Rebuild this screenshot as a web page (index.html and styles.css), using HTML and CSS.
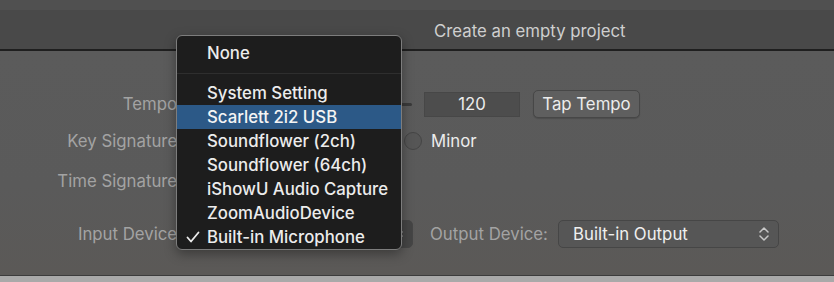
FILE: index.html
```html
<!DOCTYPE html>
<html>
<head>
<meta charset="utf-8">
<link rel="stylesheet" href="styles.css">
</head>
<body>
<div class="window">
  <div class="topstrip"></div>
  <div class="header"><span class="title">Create an empty project</span></div>
  <div class="content">
    <div class="row row-tempo">
      <div class="label">Tempo:</div>
      <div class="controls">
        <div class="slider"><div class="track"></div></div>
        <div class="field">120</div>
        <div class="button">Tap Tempo</div>
      </div>
    </div>
    <div class="row row-key">
      <div class="label">Key Signature:</div>
      <div class="controls">
        <div class="major"><span class="radio"></span><span class="text">Major</span></div>
        <span class="radio"></span><span class="text">Minor</span>
      </div>
    </div>
    <div class="row row-time">
      <div class="label">Time Signature:</div>
      <div class="controls">
        <div class="popup small"><span>4/4</span></div>
      </div>
    </div>
    <div class="row row-device">
      <div class="label">Input Device:</div>
      <div class="controls">
        <div class="popup input">
          <span>Built-in Microphone</span>
          <svg class="chevs" width="12" height="18" viewBox="0 0 12 18"><path d="M2 7 L6 3 L10 7 M2 11 L6 15 L10 11" fill="none" stroke="#a8a8a8" stroke-width="1.5" stroke-linecap="round" stroke-linejoin="round"/></svg>
        </div>
        <div class="label out-label">Output Device:</div>
        <div class="popup output">
          <span>Built-in Output</span>
          <svg class="chevs" width="12" height="18" viewBox="0 0 12 18"><path d="M2 7 L6 3 L10 7 M2 11 L6 15 L10 11" fill="none" stroke="#c8c8c8" stroke-width="1.5" stroke-linecap="round" stroke-linejoin="round"/></svg>
        </div>
      </div>
    </div>
  </div>
  <div class="bottom"></div>

  <div class="menu">
    <div class="item">None</div>
    <div class="sep"></div>
    <div class="item">System Setting</div>
    <div class="item active">Scarlett 2i2 USB</div>
    <div class="item">Soundflower (2ch)</div>
    <div class="item">Soundflower (64ch)</div>
    <div class="item">iShowU Audio Capture</div>
    <div class="item">ZoomAudioDevice</div>
    <div class="item checked"><svg class="check" width="14" height="12" viewBox="0 0 14 12"><path d="M1.5 6.5 L5 10.5 L12.5 1.5" fill="none" stroke="#ececec" stroke-width="1.8" stroke-linecap="round" stroke-linejoin="round"/></svg>Built-in Microphone</div>
  </div>
</div>
</body>
</html>
```

FILE: styles.css
```css
* { box-sizing: border-box; }
html, body { margin: 0; padding: 0; }
body {
  width: 834px;
  height: 282px;
  overflow: hidden;
  font-family: Inter, "Noto Sans", "Liberation Sans", sans-serif;
  font-size: 16.8px;
  background: #5a5a5a;
}
.window {
  position: relative;
  width: 834px;
  height: 282px;
  display: flex;
  flex-direction: column;
}
.topstrip {
  height: 10px;
  background: #505050;
}
.header {
  height: 41px;
  background: #494949;
  border-bottom: 2px solid #1f1f1f;
  display: flex;
  align-items: center;
  padding-left: 434px;
  padding-top: 2px;
}
.title {
  color: #cfcfcf;
}
.content {
  flex: 1;
  background: linear-gradient(180deg, #5b5b5b 0%, #5a5a5a 60%, #5b5957 100%);
  padding-top: 39px;
  display: flex;
  flex-direction: column;
}
.row {
  display: flex;
  align-items: center;
  height: 28px;
}
.row-key { margin-top: 9px; }
.row-time { margin-top: 12px; }
.row-device { margin-top: 25px; }
.label {
  color: #a3a3a3;
  width: 182px;
  text-align: right;
  white-space: nowrap;
}
.controls {
  margin-left: 8px;
  display: flex;
  align-items: center;
  height: 28px;
}
.text { color: #ececec; }
.slider {
  width: 222px;
  height: 20px;
  display: flex;
  align-items: center;
}
.track {
  width: 100%;
  height: 3px;
  border-radius: 2px;
  background: #3a3a3a;
}
.field {
  margin-left: 12px;
  width: 96px;
  height: 25px;
  background: #4d4d4d;
  border: 1px solid #474747;
  color: #ececec;
  text-align: center;
  line-height: 23px;
}
.button {
  margin-left: 13px;
  width: 107px;
  height: 28px;
  background: #5f5f5f;
  border: 1px solid #474747;
  border-radius: 5px;
  color: #ececec;
  text-align: center;
  line-height: 26px;
  box-shadow: 0 1px 1px rgba(0,0,0,0.15);
}
.major {
  width: 214px;
  display: flex;
  align-items: center;
}
.radio {
  display: inline-block;
  width: 18px;
  height: 18px;
  border-radius: 50%;
  background: #565656;
  border: 1px solid #454545;
}
.major .text { margin-left: 8px; }
.radio + .text { margin-left: 9px; }
.popup {
  height: 28px;
  border-radius: 5px;
  background: #565656;
  border: 1px solid #464646;
  color: #efefef;
  display: flex;
  align-items: center;
  padding-left: 14px;
  position: relative;
  white-space: nowrap;
}
.popup.small { width: 80px; }
.popup.input { width: 223px; background: #454545; }
.out-label {
  width: 118px;
  text-align: left;
  margin-left: 17px;
}
.popup.output {
  margin-left: 10px;
  width: 221px;
}
.chevs {
  position: absolute;
  right: 8px;
  top: 4px;
}
.bottom {
  height: 7px;
  background: #a9a9a9;
  border-top: 1px solid #3c3c3c;
}
.menu {
  position: absolute;
  left: 176px;
  top: 35px;
  width: 226px;
  height: 215px;
  background: #1d1d1d;
  border: 1px solid #7d7d7d;
  border-radius: 6px;
  padding: 5px 0 2px;
  box-shadow: 0 4px 12px rgba(0,0,0,0.35);
}
.item {
  height: 24px;
  line-height: 24px;
  padding-left: 30px;
  color: #ececec;
  font-weight: 500;
  white-space: nowrap;
  position: relative;
}
.item.active {
  background: #2c5987;
  color: #f4f4f4;
}
.sep {
  height: 16px;
  display: flex;
  align-items: center;
}
.sep::before {
  content: "";
  display: block;
  width: 100%;
  height: 1px;
  background: #2e2e2e;
}
.check {
  position: absolute;
  left: 9px;
  top: 6px;
}
```
